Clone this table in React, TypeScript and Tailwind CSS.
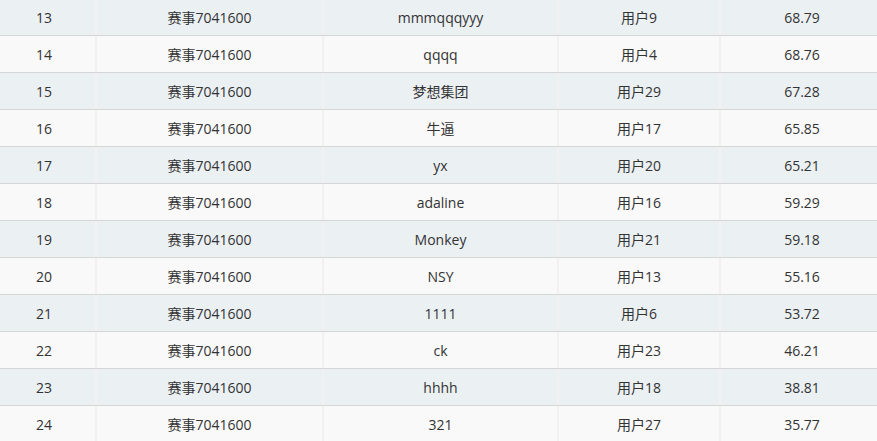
const rows = [
  { rank: 13, match: "赛事7041600", team: "mmmqqqyyy", user: "用户9", score: "68.79" },
  { rank: 14, match: "赛事7041600", team: "qqqq", user: "用户4", score: "68.76" },
  { rank: 15, match: "赛事7041600", team: "梦想集团", user: "用户29", score: "67.28" },
  { rank: 16, match: "赛事7041600", team: "牛逼", user: "用户17", score: "65.85" },
  { rank: 17, match: "赛事7041600", team: "yx", user: "用户20", score: "65.21" },
  { rank: 18, match: "赛事7041600", team: "adaline", user: "用户16", score: "59.29" },
  { rank: 19, match: "赛事7041600", team: "Monkey", user: "用户21", score: "59.18" },
  { rank: 20, match: "赛事7041600", team: "NSY", user: "用户13", score: "55.16" },
  { rank: 21, match: "赛事7041600", team: "1111", user: "用户6", score: "53.72" },
  { rank: 22, match: "赛事7041600", team: "ck", user: "用户23", score: "46.21" },
  { rank: 23, match: "赛事7041600", team: "hhhh", user: "用户18", score: "38.81" },
  { rank: 24, match: "赛事7041600", team: "321", user: "用户27", score: "35.77" },
];

function App() {
  return (
    <div
      className="w-[877px] h-[441px] overflow-hidden bg-[#f9f9f9] text-[14px] text-[#333]"
      style={{ fontFamily: '"Open Sans", "Noto Sans CJK SC", sans-serif' }}
    >
      <div className="-mt-px">
        {rows.map((r, i) => (
          <div
            key={r.rank}
            className={
              "grid grid-cols-[97px_227px_235px_162px_1fr] h-[37px] border-b border-[#d6d6d6] " +
              (i % 2 === 0 ? "bg-[#ebf0f3]" : "bg-[#f9f9f9]")
            }
          >
            <div className="flex items-center justify-center pr-[7px] border-r-2 border-[#f1f1f1]">{r.rank}</div>
            <div className="flex items-center justify-center border-r-2 border-[#f1f1f1]">{r.match}</div>
            <div className="flex items-center justify-center border-r-2 border-[#f1f1f1]">{r.team}</div>
            <div className="flex items-center justify-center border-r-2 border-[#f1f1f1]">{r.user}</div>
            <div className="flex items-center justify-center pl-[6px]">{r.score}</div>
          </div>
        ))}
      </div>
    </div>
  );
}

export default App;
